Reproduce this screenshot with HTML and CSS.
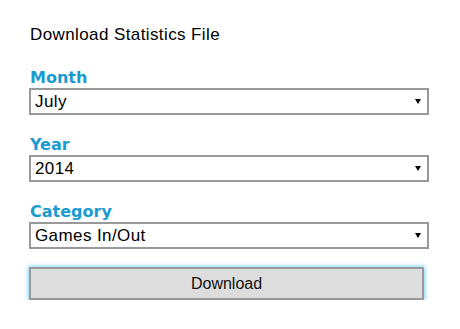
FILE: index.html
```html
<!DOCTYPE html>
<html>
<head>
<meta charset="utf-8">
<link rel="stylesheet" href="styles.css">
</head>
<body>
<div class="panel">
  <p class="title">Download Statistics File</p>
  <div class="field">
    <label class="label">Month</label>
    <div class="select"><span>July</span><span class="arrow"></span></div>
  </div>
  <div class="field">
    <label class="label">Year</label>
    <div class="select"><span>2014</span><span class="arrow"></span></div>
  </div>
  <div class="field">
    <label class="label">Category</label>
    <div class="select"><span>Games In/Out</span><span class="arrow"></span></div>
  </div>
  <button class="btn">Download</button>
</div>
</body>
</html>
```
FILE: styles.css
```css
html, body {
  margin: 0;
  padding: 0;
  background: #fff;
}
.panel {
  padding: 26px 0 0 29px;
  width: 400px;
  display: flex;
  flex-direction: column;
  font-family: "Liberation Sans", Arial, sans-serif;
}
.title {
  margin: 0 0 24px 1px;
  font-size: 17px;
  letter-spacing: 0.4px;
  line-height: 18px;
  color: #000;
}
.field {
  display: flex;
  flex-direction: column;
  margin-bottom: 20px;
}
.label {
  font-family: "DejaVu Sans", Verdana, sans-serif;
  font-weight: bold;
  font-size: 16px;
  line-height: 20px;
  color: #1a9bd0;
  margin-left: 1px;
}
.select {
  box-sizing: border-box;
  height: 27px;
  border: 2px solid #999;
  display: flex;
  align-items: center;
  justify-content: space-between;
  padding: 0 6px 0 4px;
  font-size: 17px;
  letter-spacing: 0.4px;
  color: #000;
}
.arrow {
  width: 0;
  height: 0;
  border-left: 3px solid transparent;
  border-right: 3px solid transparent;
  border-top: 5px solid #000;
}
.btn {
  box-sizing: border-box;
  width: 395px;
  height: 33px;
  margin-top: -2px;
  border: 2px solid #999;
  background: #ddd;
  font-family: "Liberation Sans", Arial, sans-serif;
  font-size: 16px;
  color: #111;
  padding: 0;
  box-shadow: 0 0 4px 1px #7fd3f5;
}
```
